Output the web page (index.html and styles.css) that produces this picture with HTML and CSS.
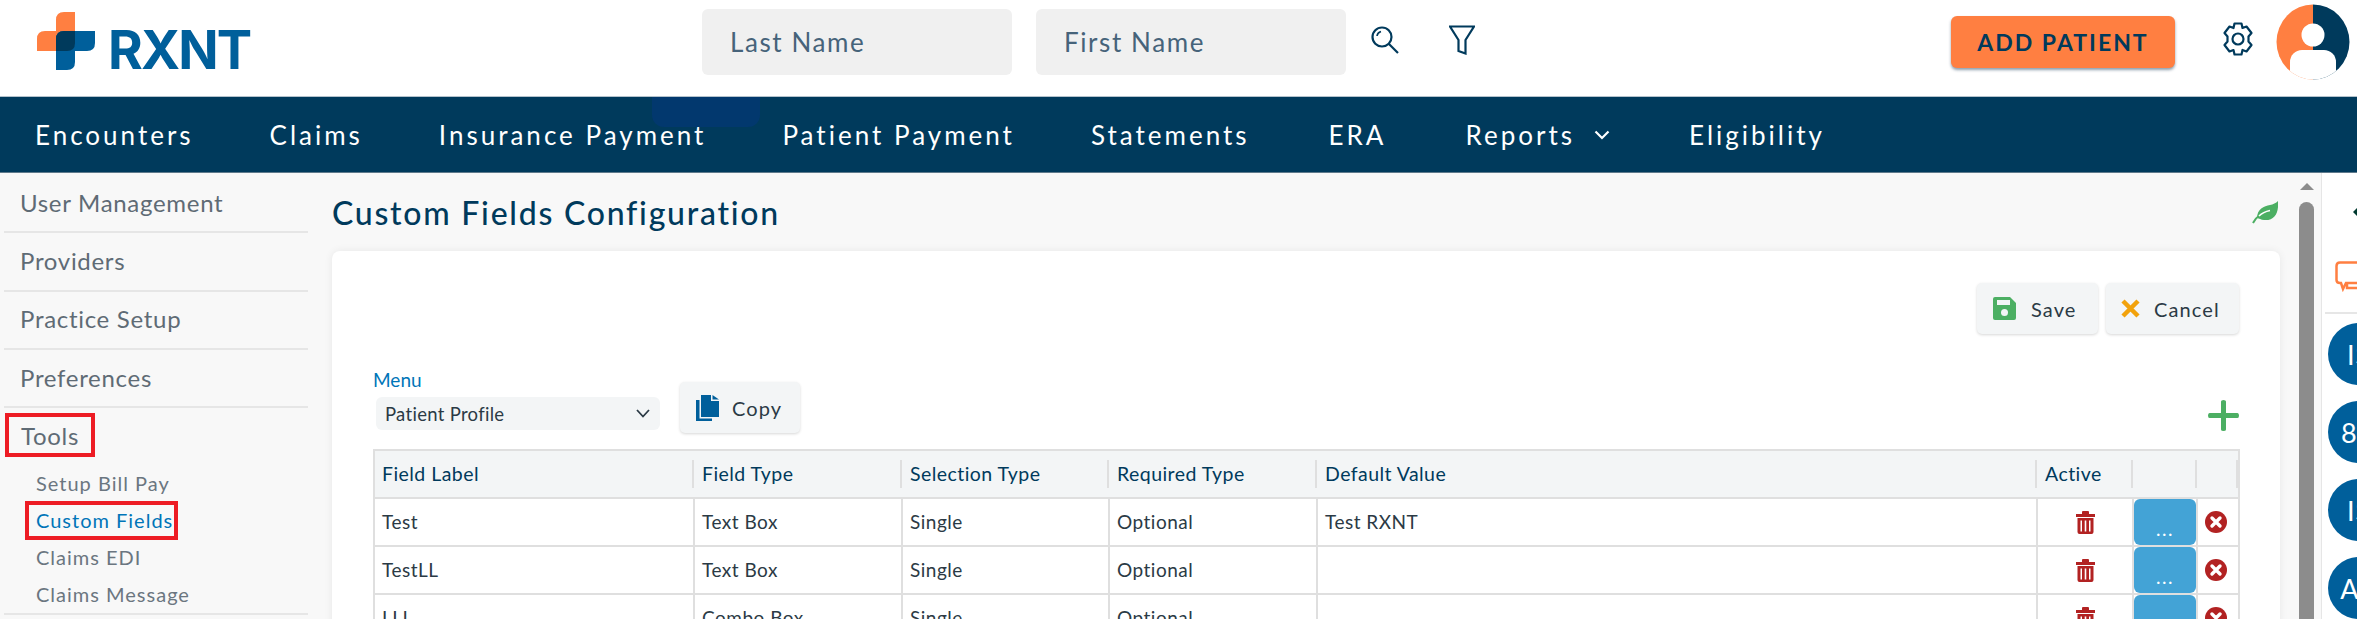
FILE: index.html
```html
<!DOCTYPE html>
<html lang="en">
<head>
<meta charset="utf-8">
<title>Custom Fields Configuration</title>
<link rel="stylesheet" href="styles.css">
</head>
<body>
<header class="topbar">
  <div class="brand">
    <svg class="brand-mark" viewBox="0 0 58 58" width="58" height="58">
      <path fill="#ff7f41" d="M38 0V39H0V27Q0 19 8 19H19V8Q19 0 27 0Z"/>
      <path fill="#005f9b" d="M19 27Q19 19 27 19H58V31Q58 39 50 39H38V50Q38 58 30 58H19Z"/>
      <path fill="#003a5c" d="M19 27Q19 19 27 19H38V31Q38 39 30 39H19Z"/>
    </svg>
    <span class="brand-name">RXNT</span>
  </div>
  <div class="search-box">Last Name</div>
  <div class="search-box">First Name</div>
  <svg class="icon-search" viewBox="0 0 28 28" width="28" height="28" fill="none" stroke="#003a5c" stroke-width="2.2">
    <circle cx="11" cy="11" r="9.5"/><path d="M18 18L27 27"/><path d="M6 10Q6.500 6.500 10 5.500" stroke-width="1.600"/>
  </svg>
  <svg class="icon-filter" viewBox="0 0 26 30" width="26" height="30" fill="none" stroke="#003a5c" stroke-width="2.2" stroke-linejoin="miter">
    <path d="M1 1.500H25L16.500 15V28.500L9.500 26V15Z"/>
  </svg>
  <button class="add-patient" type="button">ADD PATIENT</button>
  <svg class="icon-gear" viewBox="0 0 32 34" width="32" height="34" fill="none" stroke="#003a5c" stroke-width="2.2" stroke-linejoin="round">
    <path d="M12.500 1.500H19.500L20.500 6L24.500 4.500L29.500 11L26.500 14.500V19.500L29.500 23L24.500 29.500L20.500 28L19.500 32.500H12.500L11.500 28L7.500 29.500L2.500 23L5.500 19.500V14.500L2.500 11L7.500 4.500L11.500 6Z"/>
    <circle cx="16" cy="17" r="5.500"/>
  </svg>
  <svg class="avatar" viewBox="0 0 74 76" width="74" height="76">
    <defs><clipPath id="avatar-clip"><ellipse cx="37" cy="38" rx="36.500" ry="37.500"/></clipPath></defs>
    <g clip-path="url(#avatar-clip)">
      <rect width="37" height="76" fill="#ff7f41"/>
      <rect x="37" width="37" height="76" fill="#003a5c"/>
      <circle cx="37" cy="31" r="11.500" fill="#fff"/>
      <rect x="14" y="46" width="46" height="40" rx="12" fill="#fff"/>
    </g>
  </svg>
</header>

<nav class="mainnav">
  <a>Encounters</a>
  <a>Claims</a>
  <a>Insurance Payment</a>
  <a>Patient Payment</a>
  <a>Statements</a>
  <a class="nav-late">ERA</a>
  <a class="nav-late has-caret">Reports
    <svg viewBox="0 0 16 10" width="16" height="10" fill="none" stroke="#fff" stroke-width="2.2"><path d="M1.500 1.500L8 8L14.500 1.500"/></svg>
  </a>
  <a class="nav-late">Eligibility</a>
  <span class="smudge"></span>
</nav>

<div class="workspace">
  <aside class="sidebar">
    <div class="side-item">User Management</div>
    <div class="side-item">Providers</div>
    <div class="side-item">Practice Setup</div>
    <div class="side-item">Preferences</div>
    <div class="side-item side-open"><span class="tools-mark">Tools</span></div>
    <ul class="side-sub">
      <li>Setup Bill Pay</li>
      <li><span class="current-mark">Custom Fields</span></li>
      <li>Claims EDI</li>
      <li>Claims Message</li>
    </ul>
  </aside>

  <main class="content">
    <div class="title-row">
      <h1>Custom Fields Configuration</h1>
      <svg class="leaf" viewBox="0 0 26 23" width="26" height="23">
        <path fill="#4caf63" d="M26 0C27 11 23 20 12 19C9 18.700 7 17.500 5 17C5 8 12 5 18 4C21 3.500 24 2 26 0Z"/>
        <path fill="none" stroke="#4caf63" stroke-width="2" d="M1 22C3 18 5 16 8 14"/>
        <path fill="none" stroke="#fff" stroke-width="1.600" d="M7 15C10 12 13 10.500 18 9.500"/>
      </svg>
    </div>
    <section class="card">
      <div class="actions">
        <button class="btn btn-save" type="button">
          <svg viewBox="0 0 23 23" width="23" height="23">
            <path fill="#4caf63" d="M2 0H17L23 6V21Q23 23 21 23H2Q0 23 0 21V2Q0 0 2 0Z"/>
            <rect x="4" y="3" width="13" height="5" fill="#f3f5f6"/>
            <circle cx="11.500" cy="15.500" r="3.500" fill="#f3f5f6"/>
          </svg>
          Save
        </button>
        <button class="btn btn-cancel" type="button">
          <svg viewBox="0 0 19 19" width="19" height="19" fill="none" stroke="#f2a20c" stroke-width="4.500"><path d="M2 2L17 17M17 2L2 17"/></svg>
          Cancel
        </button>
      </div>
      <div class="toolbar">
        <div class="menu-field">
          <label class="menu-label">Menu</label>
          <div class="menu-select">Patient Profile
            <svg viewBox="0 0 14 9" width="14" height="9" fill="none" stroke="#2b3a45" stroke-width="1.800"><path d="M1 1L7 7.500L13 1"/></svg>
          </div>
        </div>
        <button class="btn btn-copy" type="button">
          <svg viewBox="0 0 23 26" width="23" height="26">
            <path fill="#005f9b" d="M5 0H15V6H23V22H5Z"/><path fill="#005f9b" d="M16.500 0L23 4.500H16.500Z"/>
            <path fill="#005f9b" d="M0 5H3.500V23.500H16V26H0Z"/>
          </svg>
          Copy
        </button>
        <svg class="add-row" viewBox="0 0 31 31" width="31" height="31">
          <path fill="#4caf63" d="M13 1.500Q13 0 15.500 0Q18 0 18 1.500V13H29.500Q31 13 31 15.500Q31 18 29.500 18H18V29.500Q18 31 15.500 31Q13 31 13 29.500V18H1.500Q0 18 0 15.500Q0 13 1.500 13H13Z"/>
        </svg>
      </div>
      <table class="fields">
        <thead>
          <tr>
            <th class="c-label"><div>Field Label</div></th>
            <th class="c-type"><div>Field Type</div></th>
            <th class="c-sel"><div>Selection Type</div></th>
            <th class="c-req"><div>Required Type</div></th>
            <th class="c-def"><div>Default Value</div></th>
            <th class="c-act"><div>Active</div></th>
            <th class="c-more"><div></div></th>
            <th class="c-x"><div></div></th>
          </tr>
        </thead>
        <tbody>
          <tr>
            <td>Test</td><td>Text Box</td><td>Single</td><td>Optional</td><td>Test RXNT</td>
            <td class="cell-icon"><svg class="trash" viewBox="0 0 19 23" width="19" height="23"><path fill="#b22222" d="M0 3H6V1Q6 0 7 0H12Q13 0 13 1V3H19V6H0ZM1.500 7H17.500V21Q17.500 23 15.500 23H3.500Q1.500 23 1.500 21ZM4.500 9.500V20.500H6V9.500ZM8.700 9.500V20.500H10.300V9.500ZM13 9.500V20.500H14.500V9.500Z" fill-rule="evenodd"/></svg></td>
            <td class="cell-more"><button class="more" type="button">...</button></td>
            <td class="cell-x"><svg class="remove" viewBox="0 0 22 22" width="22" height="22"><circle cx="11" cy="11" r="11" fill="#b22222"/><path d="M7 7L15 15M15 7L7 15" stroke="#fff" stroke-width="3.400" stroke-linecap="round"/></svg></td>
          </tr>
          <tr>
            <td>TestLL</td><td>Text Box</td><td>Single</td><td>Optional</td><td></td>
            <td class="cell-icon"><svg class="trash" viewBox="0 0 19 23" width="19" height="23"><path fill="#b22222" d="M0 3H6V1Q6 0 7 0H12Q13 0 13 1V3H19V6H0ZM1.500 7H17.500V21Q17.500 23 15.500 23H3.500Q1.500 23 1.500 21ZM4.500 9.500V20.500H6V9.500ZM8.700 9.500V20.500H10.300V9.500ZM13 9.500V20.500H14.500V9.500Z" fill-rule="evenodd"/></svg></td>
            <td class="cell-more"><button class="more" type="button">...</button></td>
            <td class="cell-x"><svg class="remove" viewBox="0 0 22 22" width="22" height="22"><circle cx="11" cy="11" r="11" fill="#b22222"/><path d="M7 7L15 15M15 7L7 15" stroke="#fff" stroke-width="3.400" stroke-linecap="round"/></svg></td>
          </tr>
          <tr>
            <td>LLL</td><td>Combo Box</td><td>Single</td><td>Optional</td><td></td>
            <td class="cell-icon"><svg class="trash" viewBox="0 0 19 23" width="19" height="23"><path fill="#b22222" d="M0 3H6V1Q6 0 7 0H12Q13 0 13 1V3H19V6H0ZM1.500 7H17.500V21Q17.500 23 15.500 23H3.500Q1.500 23 1.500 21ZM4.500 9.500V20.500H6V9.500ZM8.700 9.500V20.500H10.300V9.500ZM13 9.500V20.500H14.500V9.500Z" fill-rule="evenodd"/></svg></td>
            <td class="cell-more"><button class="more" type="button">...</button></td>
            <td class="cell-x"><svg class="remove" viewBox="0 0 22 22" width="22" height="22"><circle cx="11" cy="11" r="11" fill="#b22222"/><path d="M7 7L15 15M15 7L7 15" stroke="#fff" stroke-width="3.400" stroke-linecap="round"/></svg></td>
          </tr>
        </tbody>
      </table>
    </section>
  </main>

  <div class="scrollbar">
    <span class="scroll-up"></span>
    <span class="scroll-thumb"></span>
  </div>

  <aside class="rail">
    <svg class="rail-back" viewBox="0 0 8 14" width="8" height="14"><path fill="#003a2f" d="M7 0L0 7L7 14H8V0Z"/></svg>
    <svg class="rail-chat" viewBox="0 0 40 32" width="40" height="32" fill="none" stroke="#ff7f41" stroke-width="2.500"><path d="M5 1.500H36V22H11L8 28L6 22H5Q1.500 22 1.500 19V5Q1.500 1.500 5 1.500Z"/><path d="M12 22V27H36"/></svg>
    <div class="rail-users">
      <span class="user-dot">IS</span>
      <span class="user-dot">8A</span>
      <span class="user-dot">IS</span>
      <span class="user-dot">AB</span>
    </div>
  </aside>
</div>
</body>
</html>
```

FILE: styles.css
```css
* { box-sizing: border-box; }

html, body {
  margin: 0;
  height: 619px;
  overflow: hidden;
  background: #fff;
  font-family: "Lato", "Noto Sans", sans-serif;
  color: #2b3a45;
}

/* Top bar */
.topbar {
  display: flex;
  align-items: center;
  height: 97px;
  padding-bottom: 13px;
  padding-right: 7px;
  background: #fff;
  border-bottom: 1px solid #b4c2cc;
}

.brand {
  display: flex;
  align-items: flex-end;
  width: 702px;
  padding-left: 37px;
}

.brand-mark { flex: none; margin-top: -2px; }

.brand-name {
  margin-left: 13px;
  font-family: "Inter", sans-serif;
  font-weight: 700;
  font-size: 53px;
  line-height: 39px;
  height: 39px;
  letter-spacing: -1.9px;
  color: #005f9b;
}

.search-box {
  display: flex;
  align-items: center;
  width: 310px;
  height: 66px;
  margin-right: 24px;
  padding-left: 28px;
  background: #f0f0f0;
  border-radius: 6px;
  font-size: 26px;
  letter-spacing: 1.6px;
  color: #46637a;
}

.search-box + .search-box { margin-right: 0; }

.icon-search { margin-left: 25px; margin-top: -4px; }
.icon-filter { margin-left: 50px; margin-top: -4px; }

.add-patient {
  margin-left: auto;
  width: 224px;
  height: 52px;
  border: 0;
  border-radius: 6px;
  background: #ff7f41;
  box-shadow: 0 2px 3px rgba(0, 40, 70, 0.45);
  font-family: inherit;
  font-size: 23px;
  font-weight: 700;
  letter-spacing: 2px;
  color: #003a5c;
}

.icon-gear { margin-left: 47px; margin-top: -6px; }
.avatar { margin-left: 22px; }

/* Main navigation */
.mainnav {
  position: relative;
  display: flex;
  align-items: center;
  gap: 76px;
  height: 76px;
  padding-left: 35px;
  background: #003a5c;
  border-bottom: 1px solid #5f7a8c;
  font-size: 26px;
  letter-spacing: 3px;
  color: #fff;
}

.nav-late { margin-left: 3px; }

.has-caret { display: inline-flex; align-items: center; gap: 19px; }

.smudge {
  position: absolute;
  left: 652px;
  top: 0;
  width: 108px;
  height: 30px;
  background: #02386e;
  border-radius: 0 0 12px 12px;
}

/* Layout below the nav */
.workspace {
  display: flex;
  height: 446px;
  background: #f8f8f8;
}

.sidebar {
  flex: none;
  width: 332px;
  padding: 2px 0 0 4px;
}

.side-item {
  display: flex;
  align-items: center;
  width: 304px;
  height: 58.3px;
  padding: 0 0 2px 16px;
  border-bottom: 2px solid #e6e6e6;
  font-size: 24px;
  letter-spacing: 0.7px;
  color: #5f6b75;
}

.side-open { height: 56.6px; padding-bottom: 0; border-bottom: 0; }

.tools-mark {
  display: flex;
  align-items: center;
  width: 90px;
  height: 44px;
  margin: 0 0 2px -15px;
  padding-left: 12px;
  border: 4px solid #ed1c24;
}

.side-sub {
  width: 304px;
  margin: 0;
  padding: 0 0 0 32px;
  list-style: none;
  border-bottom: 2px solid #e6e6e6;
  font-size: 20px;
  letter-spacing: 1px;
  color: #6b7680;
}

.side-sub li {
  display: flex;
  align-items: center;
  height: 37px;
}

.current-mark {
  display: flex;
  align-items: center;
  flex: none;
  width: 153px;
  height: 39px;
  margin-left: -11px;
  padding-left: 7px;
  border: 4px solid #ed1c24;
  white-space: nowrap;
  color: #0075b8;
}

/* Content column */
.content {
  flex: none;
  width: 1948px;
}

.title-row {
  display: flex;
  align-items: center;
  justify-content: space-between;
  height: 78px;
  padding-right: 2px;
}

.title-row h1 {
  margin: 0;
  font-size: 32px;
  font-weight: 500;
  letter-spacing: 1.75px;
  color: #003a5c;
}

.card {
  height: 400px;
  padding: 32px 41px 0;
  background: #fff;
  border-radius: 8px 8px 0 0;
  box-shadow: 0 0 8px rgba(0, 0, 0, 0.07);
}

.actions {
  display: flex;
  justify-content: flex-end;
  gap: 8px;
}

.btn {
  display: inline-flex;
  align-items: center;
  height: 51px;
  border: 0;
  border-radius: 5px;
  background: #f3f5f6;
  box-shadow: 0 1px 3px rgba(0, 0, 0, 0.16);
  font-family: inherit;
  font-size: 20px;
  letter-spacing: 1.1px;
  color: #2b3a45;
}

.btn-save { width: 121px; padding-left: 16px; gap: 15px; }
.btn-cancel { width: 133px; padding-left: 15px; gap: 14px; }
.btn-copy { width: 120px; margin-left: 20px; padding-left: 16px; gap: 13px; }

.toolbar {
  display: flex;
  align-items: flex-end;
  height: 64px;
  margin-top: 35px;
}

.menu-field { margin-bottom: 3px; }

.menu-label {
  display: block;
  height: 28px;
  font-size: 19px;
  line-height: 22px;
  color: #0075b8;
}

.menu-select {
  display: flex;
  align-items: center;
  justify-content: space-between;
  width: 284px;
  height: 33px;
  margin-left: 3px;
  padding: 0 10px 0 9px;
  background: #f3f5f6;
  border-radius: 6px;
  font-size: 18.500px;
  letter-spacing: 0.3px;
}

.add-row { margin-left: auto; margin-bottom: 2px; margin-right: 0; }

/* Table */
.fields {
  width: 1865px;
  margin-top: 16px;
  border-collapse: collapse;
  table-layout: fixed;
  font-size: 19px;
  letter-spacing: 0.5px;
}

.fields th,
.fields td {
  height: 48px;
  text-align: left;
  font-weight: 400;
  border: 2px solid #dfdfdf;
}

.fields th {
  padding: 0 0 1px;
  border-left: 0;
  border-right: 0;
  background: #f3f5f6;
  font-size: 19.500px;
  letter-spacing: 0.45px;
  color: #003a5c;
}

.fields th:first-child { border-left: 2px solid #dfdfdf; }
.fields th:last-child { border-right: 2px solid #dfdfdf; }

.fields th div {
  display: flex;
  align-items: center;
  height: 28px;
  padding-left: 8px;
  border-right: 2px solid #dfdfdf;
}

.fields th.c-label div { padding-left: 7px; }

.fields td {
  padding: 0 0 2px 7px;
  color: #2b3a45;
}

.c-label { width: 320px; }
.c-type { width: 208px; }
.c-sel { width: 207px; }
.c-req { width: 208px; }
.c-def { width: 720px; }
.c-act { width: 96px; }
.c-more { width: 64px; }
.c-x { width: 42px; }

.fields .cell-icon,
.fields .cell-more,
.fields .cell-x { padding: 0; text-align: center; }

.trash, .remove { display: block; margin: 0 auto; }
.remove { margin-left: 7px; }

.more {
  display: block;
  width: 100%;
  height: 46px;
  padding: 12px 0 0;
  border: 0;
  border-radius: 6px;
  background: #43a3d6;
  font-family: inherit;
  font-size: 19px;
  letter-spacing: 1.5px;
  color: #fff;
}

/* Scrollbar */
.scrollbar {
  display: flex;
  flex: none;
  flex-direction: column;
  align-items: center;
  width: 41px;
  padding: 10px 0 0 12px;
}

.scroll-up {
  width: 0;
  height: 0;
  border-left: 7px solid transparent;
  border-right: 7px solid transparent;
  border-bottom: 7px solid #8c8c8c;
}

.scroll-thumb {
  width: 15px;
  height: 420px;
  margin-top: 12px;
  border-radius: 8px 8px 0 0;
  background: #8c8c8c;
}

/* Right rail */
.rail {
  flex: none;
  width: 36px;
  overflow: hidden;
  background: #fff;
  border-left: 1px solid #e6e6e6;
}

.rail-back { display: block; margin: 32px 0 0 31px; }
.rail-chat { display: block; margin: 42px 0 0 13px; }

.rail-users {
  width: 80px;
  margin: 19px 0 0 3px;
  padding-top: 9px;
  border-top: 2px solid #e6e6e6;
}

.user-dot {
  display: flex;
  align-items: center;
  justify-content: center;
  width: 62px;
  height: 62px;
  margin: 0 0 16px 3px;
  border-radius: 50%;
  background: #005f9b;
  font-size: 27px;
  letter-spacing: 1px;
  color: #fff;
}
```
